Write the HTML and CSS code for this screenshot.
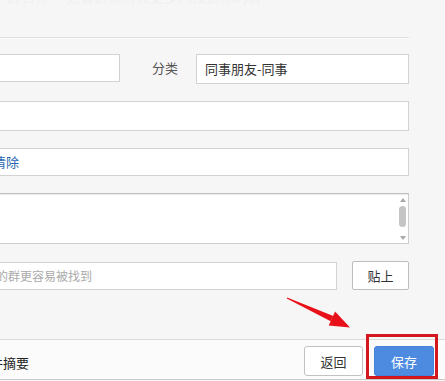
FILE: index.html
```html
<!DOCTYPE html>
<html>
<head>
<meta charset="utf-8">
<title>编辑群资料</title>
<link rel="stylesheet" href="styles.css">
</head>
<body>
<div class="dialog">
    <div class="main">
        <div class="head">
            <span class="ghost ghost-a">群名称</span>
            <span class="ghost ghost-b">完善群资料让更多人找到你的群</span>
        </div>
        <div class="form">
            <div class="row row-first">
                <div class="field field-short"></div>
                <span class="label">分类</span>
                <div class="field field-cat">同事朋友-同事</div>
            </div>
            <div class="row">
                <div class="field field-tall"></div>
            </div>
            <div class="row">
                <div class="field field-link"><a class="link">清除</a></div>
            </div>
            <div class="row">
                <div class="memo">
                    <div class="memo-text"></div>
                    <div class="scrollbar">
                        <span class="arrow-up"></span>
                        <span class="thumb"></span>
                        <span class="arrow-down"></span>
                    </div>
                </div>
            </div>
            <div class="row row-tags">
                <div class="field field-tag"><span class="placeholder">的群更容易被找到</span></div>
                <button type="button" class="btn btn-paste">贴上</button>
            </div>
        </div>
    </div>
    <div class="footer">
        <span class="summary">文件摘要</span>
        <div class="actions">
            <button type="button" class="btn btn-back">返回</button>
            <button type="button" class="btn btn-save">保存</button>
        </div>
    </div>
</div>

<!-- annotation drawn over the screenshot -->
<svg class="pointer" width="445" height="381" viewBox="0 0 445 381">
    <polygon fill="#e8111a" points="287.2,297.4 333.3,315.9 330.7,321.3 286.8,298.6"/>
    <polygon fill="#e8111a" points="350,327.5 335.1,311.6 328.7,325.6"/>
</svg>
<div class="highlight"></div>
</body>
</html>
```

FILE: styles.css
```css
html, body {
    margin: 0;
    overflow: hidden;
}
body {
    width: 445px;
    height: 381px;
    background-color: #f6f6f6;
    font-family: "Noto Sans CJK SC", "Noto Sans", sans-serif;
    font-size: 13px;
    color: #333;
}
* {
    box-sizing: border-box;
}
.dialog {
    margin-left: -40px;
    width: 485px;
}
.main {
    padding: 0 36px 0 20px;
}
.head {
    height: 38px;
    border-bottom: 1px solid #e0e0e0;
    box-shadow: 0 1px 0 #fdfdfd;
    overflow: hidden;
    white-space: nowrap;
}
.ghost {
    display: inline-block;
    margin-top: -12px;
    font-size: 14px;
    line-height: 17px;
    color: #f0f0f0;
    vertical-align: top;
}
.ghost-a {
    margin-left: 27px;
}
.ghost-b {
    margin-left: 14px;
}
.form {
    display: flex;
    flex-direction: column;
    gap: 17px;
    padding-top: 16px;
}
.row {
    display: flex;
    align-items: flex-start;
}
.field {
    height: 28px;
    border: 1px solid #d2d2d2;
    background-color: #fff;
    line-height: 26px;
    padding: 0 8px;
    white-space: nowrap;
}
.field-short {
    width: 140px;
}
.label {
    flex: none;
    margin: 0 18px 0 32px;
    line-height: 28px;
    white-space: nowrap;
    color: #555;
}
.field-cat {
    flex: 1;
    height: 30px;
    line-height: 28px;
}
.field-tall {
    flex: 1;
    height: 30px;
}
.field-link {
    flex: 1;
    padding-left: 12px;
}
.link {
    color: #2a68b4;
}
.memo {
    flex: 1;
    height: 51px;
    display: flex;
    border: 1px solid #cdcdcd;
    border-top-color: #bdbdbd;
    background-color: #fff;
    box-shadow: inset 0 1px 1px #ececec;
}
.memo-text {
    flex: 1;
}
.scrollbar {
    width: 11px;
    display: flex;
    flex-direction: column;
    align-items: center;
}
.arrow-up {
    margin-top: 4px;
    border-left: 3px solid transparent;
    border-right: 3px solid transparent;
    border-bottom: 4px solid #a8a8a8;
}
.thumb {
    margin-top: 4px;
    width: 7px;
    height: 21px;
    border-radius: 4px;
    background-color: #c4c4c4;
}
.arrow-down {
    margin-top: 9px;
    border-left: 3px solid transparent;
    border-right: 3px solid transparent;
    border-top: 4px solid #a8a8a8;
}
.field-tag {
    width: 357px;
    margin-top: 1px;
    padding-left: 15px;
    font-size: 12px;
}
.placeholder {
    color: #aaa;
}
.btn {
    font-family: inherit;
    font-size: 13px;
    color: #333;
    background-color: #fff;
    border: 1px solid #bdbdbd;
    padding: 0;
    margin: 0;
}
.btn-paste {
    width: 57px;
    height: 29px;
    margin-left: 15px;
    border-radius: 2px;
}
.footer {
    margin-top: 49px;
    height: 41px;
    display: flex;
    justify-content: space-between;
    align-items: flex-start;
    padding: 0 11px 0 17px;
    border-top: 1px solid #dadada;
    border-bottom: 1px solid #c9c9c9;
    background-color: #fbfbfb;
}
.summary {
    margin-top: 13px;
    line-height: 20px;
    color: #222;
}
.actions {
    display: flex;
    gap: 11px;
    padding-top: 6px;
}
.btn-back {
    width: 59px;
    height: 30px;
    border-radius: 3px;
    border-color: #c2c2c2;
}
.btn-save {
    width: 60px;
    height: 30px;
    border-radius: 3px;
    border-color: #4582d8;
    background-color: #4c8be0;
    color: #fff;
}
.pointer {
    position: absolute;
    left: 0;
    top: 0;
    pointer-events: none;
}
.highlight {
    position: absolute;
    left: 366px;
    top: 334px;
    width: 72px;
    height: 45px;
    border: 3px solid #d4161d;
}
```
